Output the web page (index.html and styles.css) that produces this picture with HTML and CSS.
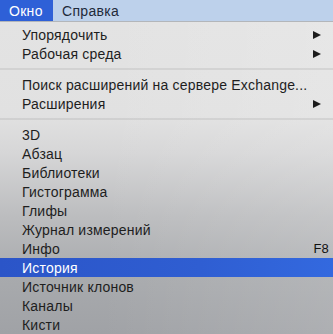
FILE: index.html
```html
<!DOCTYPE html>
<html lang="ru">
<head>
    <meta charset="UTF-8">
    <title>Окно</title>
    <link rel="stylesheet" href="styles.css">
</head>
<body>
    <div class="menubar">
        <span class="bar-item active">Окно</span>
        <span class="bar-item">Справка</span>
    </div>
    <div class="menu">
        <div class="item">Упорядочить <span class="arrow"></span></div>
        <div class="item">Рабочая среда <span class="arrow"></span></div>
        <div class="sep"></div>
        <div class="item">Поиск расширений на сервере Exchange...</div>
        <div class="item">Расширения <span class="arrow"></span></div>
        <div class="sep"></div>
        <div class="item">3D</div>
        <div class="item">Абзац</div>
        <div class="item">Библиотеки</div>
        <div class="item">Гистограмма</div>
        <div class="item">Глифы</div>
        <div class="item">Журнал измерений</div>
        <div class="item">Инфо <span class="key">F8</span></div>
        <div class="item selected">История</div>
        <div class="item">Источник клонов</div>
        <div class="item">Каналы</div>
        <div class="item">Кисти</div>
    </div>
</body>
</html>
```
FILE: styles.css
```css
body {
    margin: 0;
    width: 333px;
    height: 334px;
    overflow: hidden;
    font-family: "Liberation Sans", Arial, sans-serif;
    font-size: 14px;
    letter-spacing: 0.2px;
    color: #1e1e1e;
    background: #a4a6a9;
}
.menubar {
    display: flex;
    height: 22px;
    background: #bdd1eb;
    border-bottom: 1px solid #b3b6ba;
    box-sizing: border-box;
}
.bar-item {
    display: flex;
    align-items: center;
    padding: 0 9px 0 9px;
    font-size: 14px;
    letter-spacing: 0.3px;
    color: #1e2a3a;
}
.bar-item.active {
    width: 53px;
    box-sizing: border-box;
    background: #2e60d7;
    color: #fff;
}
.menu {
    height: 312px;
    padding-top: 3px;
    box-sizing: border-box;
    background:
        linear-gradient(to right, rgba(255,255,255,0) 30%, rgba(255,255,255,0.14) 100%),
        linear-gradient(to bottom, #e3e3e3 0, #e1e1e1 30%, #d6d6d7 42%, #bcbdbf 62%, #a8aaad 82%, #a0a2a6 100%);
}
.item {
    display: flex;
    align-items: center;
    justify-content: space-between;
    height: 19px;
    padding: 0 12px 0 22px;
}
.item.selected {
    background: linear-gradient(to right, #2b55c8, #2f5ed2 60%, #3369df);
    color: #fff;
}
.arrow {
    width: 0;
    height: 0;
    border-top: 4.5px solid transparent;
    border-bottom: 4.5px solid transparent;
    border-left: 8px solid #1c1c1c;
}
.key {
    font-size: 13px;
    margin-right: -8px;
    color: #111;
}
.sep {
    height: 2px;
    margin: 5px 0;
    background: rgba(0, 0, 0, 0.07);
}
```
